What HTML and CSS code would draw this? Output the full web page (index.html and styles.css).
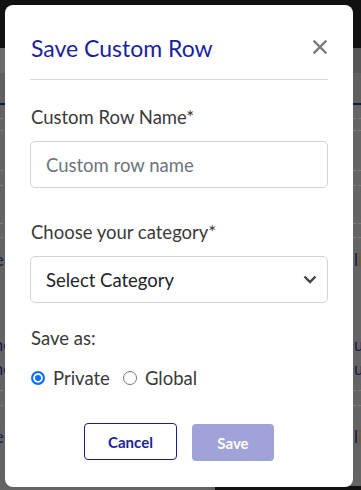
FILE: index.html
```
<!DOCTYPE html>
<html>
<head>
<title>Save Custom Row</title>
<meta charset="UTF-8">
<meta name="viewport" content="width=device-width, initial-scale=1.0">
<link rel="stylesheet" href="styles.css">
</head>
<body>

<!-- page behind the dialog (already dimmed by the backdrop) -->
<div class="page">
  <div class="topbar"></div>
  <div class="toolbar"><div class="toolbarBrand"></div></div>
  <div class="subbar"></div>
  <div class="accentLine"></div>

  <div class="gridRow h13"></div>
  <div class="gridRow h11"></div>
  <div class="gridRow h39"></div>
  <div class="gridRow h14"></div>
  <div class="gridRow h37"></div>
  <div class="gridRow h13"></div>

  <div class="gridBlock">
    <div class="cellLine first"><span class="cellLeft">Label</span><span class="cellRight">l<em>i</em>st</span></div>
    <div class="cellLine spaced"><span class="cellLeft">Name</span><span class="cellRight">user</span></div>
    <div class="cellLine"><span class="cellLeft">Name</span><span class="cellRight">user</span></div>
  </div>

  <div class="gridRow h14"></div>
  <div class="gridBlock last">
    <div class="cellLine lower"><span class="cellLeft">Label</span><span class="cellRight">l<em>i</em>st</span></div>
  </div>

  <div class="footerBar"><div class="footerGap"></div></div>
</div>

<!-- dialog -->
<div class="modalBox">
  <div class="modalHeader">
    <h2 class="modalTitle">Save Custom Row</h2>
    <button class="closeBtn" aria-label="Close">
      <svg width="14" height="14" viewBox="0 0 14 14">
        <path d="M1.5 1.5 L12.5 12.5 M12.5 1.5 L1.5 12.5" stroke="#7a7a7a" stroke-width="2.4" stroke-linecap="square" fill="none"/>
      </svg>
    </button>
  </div>

  <div class="modalBody">
    <div class="formGroup nameGroup">
      <label class="fieldLabel" for="rowName">Custom Row Name*</label>
      <input class="textInput" id="rowName" type="text" placeholder="Custom row name">
    </div>

    <div class="formGroup categoryGroup">
      <label class="fieldLabel" for="rowCategory">Choose your category*</label>
      <div class="selectWrap">
        <select class="textInput selectInput" id="rowCategory">
          <option selected>Select Category</option>
        </select>
        <svg class="selectChevron" width="14" height="9" viewBox="0 0 14 9">
          <path d="M1.5 1.5 L7 7 L12.5 1.5" stroke="#444" stroke-width="2.4" fill="none"/>
        </svg>
      </div>
    </div>

    <div class="formGroup">
      <div class="fieldLabel saveAsLabel">Save as:</div>
      <div class="radioRow">
        <label class="radioOpt"><input type="radio" name="scope" value="private" checked> Private</label>
        <label class="radioOpt"><input type="radio" name="scope" value="global"> Global</label>
      </div>
    </div>
  </div>

  <div class="modalFooter">
    <button class="dlgBtn cancelBtn">Cancel</button>
    <button class="dlgBtn saveBtn" disabled>Save</button>
  </div>
</div>

</body>
</html>
```

FILE: styles.css
```
html, body {
  margin: 0;
  padding: 0;
  height: 100%;
  font-family: "Lato", "Liberation Sans", sans-serif;
}

/******************************
 *  Page behind the dialog
 ******************************/
.page {
  height: 100%;
  background-color: #646464;
  display: flex;
  flex-direction: column;
  overflow: hidden;
}
.topbar { height: 48px; background-color: #111; flex: none; }
.toolbar {
  height: 25px;
  background-color: #555;
  flex: none;
}
.toolbarBrand { width: 120px; height: 100%; background-color: #6b6b6b; }
.subbar { height: 30px; background-color: #606060; flex: none; }
.accentLine { height: 2px; background-color: #10154a; flex: none; }

.gridRow {
  flex: none;
  border-bottom: 1px dashed #7c7c7c;
}
.h11 { height: 11px; }
.h13 { height: 13px; }
.h14 { height: 14px; }
.h37 { height: 37px; }
.h39 { height: 39px; }

.gridBlock {
  flex: none;
  height: 152px;
  border-bottom: 1px dashed #7c7c7c;
}
.gridBlock.last {
  height: 80px;
  border-bottom: none;
}

.cellLine {
  display: flex;
  justify-content: space-between;
  height: 24px;
  line-height: 24px;
  font-size: 17px;
  color: #161a48;
  white-space: nowrap;
}
.cellLine.first { margin-top: 10px; }
.cellLine.spaced { margin-top: 61px; }
.cellLine.lower { margin-top: 19px; }
.cellLeft { margin-left: -32px; }
.cellRight { width: 7px; overflow: hidden; }
.cellRight em { font-style: normal; color: #7a5a1e; }

.footerBar {
  flex: none;
  height: 4px;
  background-color: #111;
  display: flex;
}
.footerGap { width: 215px; background-color: #646464; }

/******************************
 *  Dialog
 ******************************/
.modalBox {
  position: fixed;
  top: 5px;
  left: 5px;
  width: 348px;
  box-sizing: border-box;
  padding: 0 25px 26px 25px;
  background-color: #fff;
  border-radius: 8px;
}

.modalHeader {
  display: flex;
  justify-content: space-between;
  align-items: center;
  padding: 28px 0 16px 0;
  border-bottom: 1px solid #d3d8e0;
}
.modalTitle {
  margin: 0 0 0 1px;
  font-size: 23px;
  line-height: 30px;
  font-weight: 400;
  color: #1b1f9e;
}
.closeBtn {
  border: none;
  background: transparent;
  padding: 0;
  margin: 0 1px 3px 0;
  width: 14px;
  height: 14px;
  display: block;
}
.closeBtn svg { display: block; }

.modalBody { padding-top: 25px; }

.fieldLabel {
  display: block;
  font-size: 18.5px;
  line-height: 24px;
  color: #3a3a3a;
  margin: 0 0 12px 1px;
}
.saveAsLabel { margin-bottom: 16px; }

.nameGroup { margin-bottom: 32px; }
.categoryGroup { margin-bottom: 23px; }

.textInput {
  display: block;
  width: 100%;
  height: 47px;
  box-sizing: border-box;
  border: 1px solid #ced4da;
  border-radius: 5px;
  padding: 0 15px;
  font-family: inherit;
  font-size: 18.5px;
  color: #212529;
  background-color: #fff;
  outline: none;
}
.textInput::placeholder { color: #6c757d; }

.selectWrap { position: relative; }
.selectInput {
  -webkit-appearance: none;
  -moz-appearance: none;
  appearance: none;
}
.selectChevron {
  position: absolute;
  right: 11px;
  top: 19px;
  pointer-events: none;
}

.radioRow {
  display: flex;
  align-items: center;
  height: 24px;
  gap: 13px;
  margin-left: 1px;
}
.radioOpt {
  display: flex;
  align-items: center;
  gap: 8px;
  font-size: 18.5px;
  line-height: 24px;
  color: #3a3a3a;
}
.radioOpt input {
  -webkit-appearance: none;
  appearance: none;
  margin: 0;
  width: 14px;
  height: 14px;
  border: 1px solid #767676;
  border-radius: 50%;
  box-sizing: border-box;
  background-color: #fff;
}
.radioOpt input:checked {
  border: 2px solid #0d6efd;
  background-color: #0d6efd;
  box-shadow: inset 0 0 0 2px #fff;
}

.modalFooter {
  display: flex;
  justify-content: center;
  gap: 15px;
  margin-top: 33px;
}
.dlgBtn {
  height: 37px;
  border-radius: 4px;
  font-family: inherit;
  font-size: 15px;
  font-weight: 700;
  padding: 0;
}
.cancelBtn {
  width: 93px;
  border: 1px solid #1a1f8f;
  background-color: #fff;
  color: #1b2399;
}
.saveBtn {
  width: 82px;
  margin-top: 1px;
  border: none;
  background-color: #9fa3d8;
  color: #fff;
}
```
